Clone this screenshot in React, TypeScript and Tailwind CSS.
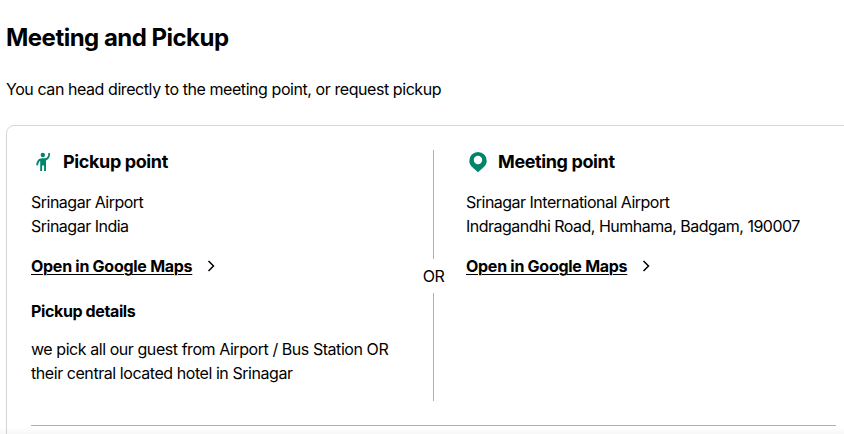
import type { ReactNode } from "react";

function PersonIcon() {
  return (
    <svg width="24" height="24" viewBox="0 0 24 24" className="shrink-0" fill="#00856a">
      <circle cx="11.8" cy="5" r="2.2" />
      <path d="M17.300 2.900h1.700c0 4-1 6.200-4 7.500V21h-1.900v-5.500h-2V21H9.200V10.800c-1.300.8-1.700 2.100-2.100 4.400H5.200c.5-4.300 2.200-6.900 6-7h2.200c2.900-.2 3.800-1.700 3.900-5.300z" />
    </svg>
  );
}

function PinIcon() {
  return (
    <svg width="24" height="24" viewBox="0 0 24 24" className="shrink-0" fill="#00856a" fillRule="evenodd">
      <path d="M12 2a8.700 8.700 0 0 0-8.700 8.700c0 2.700 1.100 4.600 2.800 6.200L12 22.300l5.900-5.400c1.700-1.600 2.800-3.500 2.800-6.200A8.700 8.700 0 0 0 12 2zm0 3.800a4.200 4.200 0 1 1 0 8.400A4.200 4.200 0 0 1 12 5.800z" />
    </svg>
  );
}

function Title({ icon, children }: { icon: ReactNode; children: ReactNode }) {
  return (
    <div className="flex h-6 items-center gap-2">
      {icon}
      <h3 className="text-lg leading-6 font-bold tracking-[-0.38px] whitespace-nowrap">{children}</h3>
    </div>
  );
}

function MapsLink() {
  return (
    <a className="mt-4 flex h-6 items-center gap-[13px]">
      <span className="w-[161px] font-bold tracking-[-0.27px] whitespace-nowrap underline decoration-1 underline-offset-2">
        Open in Google Maps
      </span>
      <svg width="12" height="12" viewBox="0 0 12 12" className="shrink-0" fill="none" stroke="#000" strokeWidth="1.5">
        <path d="M3.500 1l5 5-5 5" />
      </svg>
    </a>
  );
}

export default function App() {
  return (
    <main className="relative h-[434px] w-[844px] overflow-hidden bg-white pl-[6px] font-['Inter','Liberation_Sans',sans-serif] text-base leading-6 text-black">
      <h2 className="pt-[22px] text-2xl leading-8 font-bold tracking-[-0.52px]">Meeting and Pickup</h2>
      <p className="mt-[23px] tracking-[-0.43px]">
        You can head directly to the meeting point, or request pickup
      </p>
      <section className="mt-6 h-[330px] w-[855px] rounded-lg border border-[#d6d6d6] p-6">
        <div className="flex h-[251px]">
          <div className="w-[392px] shrink-0">
            <Title icon={<PersonIcon />}>Pickup point</Title>
            <p className="mt-4 tracking-[-0.5px]">Srinagar Airport<br />Srinagar India</p>
            <MapsLink />
            <h4 className="mt-[21px] font-bold tracking-[-0.38px]">Pickup details</h4>
            <p className="mt-[14px] tracking-[-0.44px] whitespace-nowrap">
              we pick all our guest from Airport / Bus Station OR<br />
              their central located hotel in Srinagar
            </p>
          </div>
          <div className="flex w-[21px] shrink-0 flex-col items-center">
            <div className="w-px flex-1 bg-[#b0b0b0]" />
            <span className="my-[5px] tracking-[-0.5px]">OR</span>
            <div className="w-px flex-1 bg-[#b0b0b0]" />
          </div>
          <div className="ml-[22px]">
            <Title icon={<PinIcon />}>Meeting point</Title>
            <p className="mt-4 tracking-[-0.51px] whitespace-nowrap">
              Srinagar International Airport<br />Indragandhi Road, Humhama, Badgam, 190007
            </p>
            <MapsLink />
          </div>
        </div>
        <div className="mt-6 h-px bg-[#b0b0b0]" />
      </section>
      <div className="absolute inset-x-0 bottom-0 h-2 bg-linear-to-b from-black/0 to-black/[0.03]" />
    </main>
  );
}
